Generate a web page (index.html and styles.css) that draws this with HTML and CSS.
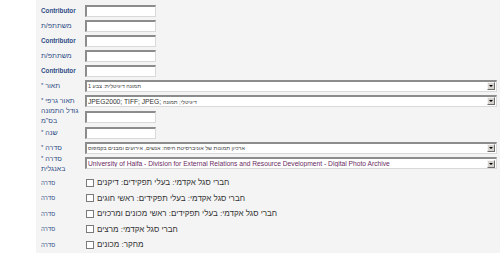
FILE: index.html
```html
<!DOCTYPE html>
<html lang="he">
<head>
    <meta charset="UTF-8">
    <title>טופס פריט</title>
    <link rel="stylesheet" href="styles.css">
</head>
<body>
    <div class="panel">
        <div class="row">
            <div class="label en">Contributor</div>
            <div class="field"><div class="text-input"></div></div>
        </div>
        <div class="row">
            <div class="label">משתתפ/ת</div>
            <div class="field"><div class="text-input"></div></div>
        </div>
        <div class="row">
            <div class="label en">Contributor</div>
            <div class="field"><div class="text-input"></div></div>
        </div>
        <div class="row">
            <div class="label">משתתפ/ת</div>
            <div class="field"><div class="text-input"></div></div>
        </div>
        <div class="row">
            <div class="label en">Contributor</div>
            <div class="field"><div class="text-input"></div></div>
        </div>

        <div class="row">
            <div class="label"><span class="req">*</span> תאור</div>
            <div class="field">
                <div class="select"><span class="value he">תמונה דיגיטלית: צבע 1</span><span class="arrow"></span></div>
            </div>
        </div>
        <div class="row">
            <div class="label"><span class="req">*</span> תאור גרפי</div>
            <div class="field">
                <div class="select"><span class="value">JPEG2000; TIFF; JPEG; <span class="he">דיגיטלי; תמונה</span></span><span class="arrow"></span></div>
            </div>
        </div>
        <div class="row tall">
            <div class="label two-line">
                <span class="line">גודל התמונה</span>
                <span class="line">בס"מ</span>
            </div>
            <div class="field"><div class="text-input"></div></div>
        </div>
        <div class="row">
            <div class="label"><span class="req">*</span> שנה</div>
            <div class="field"><div class="text-input"></div></div>
        </div>
        <div class="row">
            <div class="label"><span class="req">*</span> סדרה</div>
            <div class="field">
                <div class="select"><span class="value he">ארכיון תמונות של אוניברסיטת חיפה: אנשים, אירועים ומבנים בקמפוס</span><span class="arrow"></span></div>
            </div>
        </div>
        <div class="row taller">
            <div class="label two-line lower">
                <span class="line"><span class="req">*</span> סדרה</span>
                <span class="line">באנגלית</span>
            </div>
            <div class="field top">
                <div class="select"><span class="value uh">University of Haifa - Division for External Relations and Resource Development - Digital Photo Archive</span><span class="arrow"></span></div>
            </div>
        </div>

        <div class="checks">
            <div class="row check">
                <div class="label small">סדרה</div>
                <div class="field"><span class="box"></span><span class="check-text">חברי סגל אקדמי: בעלי תפקידים: דיקנים</span></div>
            </div>
            <div class="row check">
                <div class="label small">סדרה</div>
                <div class="field"><span class="box"></span><span class="check-text">חברי סגל אקדמי: בעלי תפקידים: ראשי חוגים</span></div>
            </div>
            <div class="row check">
                <div class="label small">סדרה</div>
                <div class="field"><span class="box"></span><span class="check-text">חברי סגל אקדמי: בעלי תפקידים: ראשי מכונים ומרכזים</span></div>
            </div>
            <div class="row check">
                <div class="label small">סדרה</div>
                <div class="field"><span class="box"></span><span class="check-text">חברי סגל אקדמי: מרצים</span></div>
            </div>
            <div class="row check">
                <div class="label small">סדרה</div>
                <div class="field"><span class="box"></span><span class="check-text">מחקר: מכונים</span></div>
            </div>
        </div>
    </div>
</body>
</html>
```

FILE: styles.css
```css
body {
    margin: 0;
    background-color: #ffffff;
    font-family: "Liberation Sans", Arial, sans-serif;
}
.panel {
    margin-left: 36px;
    min-height: 253px;
    background-color: #f4f4f4;
    padding-top: 3px;
    box-sizing: border-box;
    overflow: hidden;
}
.row {
    display: flex;
    align-items: center;
    height: 15px;
}
.row.tall {
    height: 17px;
}
.row.taller {
    height: 18px;
}
.checks {
    padding-top: 2px;
}
.row.check {
    height: 15.5px;
}
.label {
    width: 44px;
    padding-left: 5px;
    flex: none;
    font-size: 7px;
    line-height: 8px;
    color: #2f4c86;
    white-space: nowrap;
}
.label.en {
    font-weight: bold;
    font-size: 6.3px;
}
.label.two-line {
    line-height: 10px;
    margin-bottom: 2px;
}
.label.two-line.lower {
    line-height: 9.5px;
    margin-bottom: 1px;
}
.line {
    display: block;
}
.label.small {
    font-size: 6px;
}
.req {
    font-size: 6px;
    vertical-align: 1px;
}
.field {
    flex: 1;
    display: flex;
    align-items: center;
    padding-right: 3px;
    min-width: 0;
}
.field.top {
    align-self: flex-start;
    padding-top: 2px;
}
.text-input {
    width: 71px;
    height: 12px;
    box-sizing: border-box;
    background-color: #ffffff;
    border-top: 2px solid #8c8c8c;
    border-left: 2px solid #8c8c8c;
    border-right: 1px solid #d9d9d9;
    border-bottom: 1px solid #d9d9d9;
}
.select {
    flex: 1;
    display: flex;
    align-items: center;
    height: 12px;
    box-sizing: border-box;
    background-color: #ffffff;
    border-top: 2px solid #8c8c8c;
    border-left: 2px solid #8c8c8c;
    border-right: 1px solid #d9d9d9;
    border-bottom: 1px solid #d9d9d9;
    overflow: hidden;
}
.value {
    flex: 1;
    padding-left: 1px;
    font-size: 6.7px;
    color: #333333;
    white-space: nowrap;
    overflow: hidden;
}
.value.he,
.value .he {
    font-size: 5.5px;
    color: #444444;
}
.value.uh {
    color: #6a2a62;
}
.arrow {
    flex: none;
    width: 8px;
    height: 8px;
    margin-right: 1px;
    box-sizing: border-box;
    background-color: #d6d3ce;
    border-top: 1px solid #f4f4f4;
    border-left: 1px solid #f4f4f4;
    border-right: 1px solid #6e6e6e;
    border-bottom: 1px solid #6e6e6e;
    display: flex;
    align-items: center;
    justify-content: center;
}
.arrow::after {
    content: "";
    border-left: 2px solid transparent;
    border-right: 2px solid transparent;
    border-top: 2px solid #000000;
}
.box {
    flex: none;
    width: 8px;
    height: 8px;
    box-sizing: border-box;
    background-color: #ffffff;
    border: 1px solid #7a7a7a;
    margin-left: 1px;
    margin-right: 3px;
}
.check-text {
    font-size: 8px;
    color: #333333;
    white-space: nowrap;
}
```
